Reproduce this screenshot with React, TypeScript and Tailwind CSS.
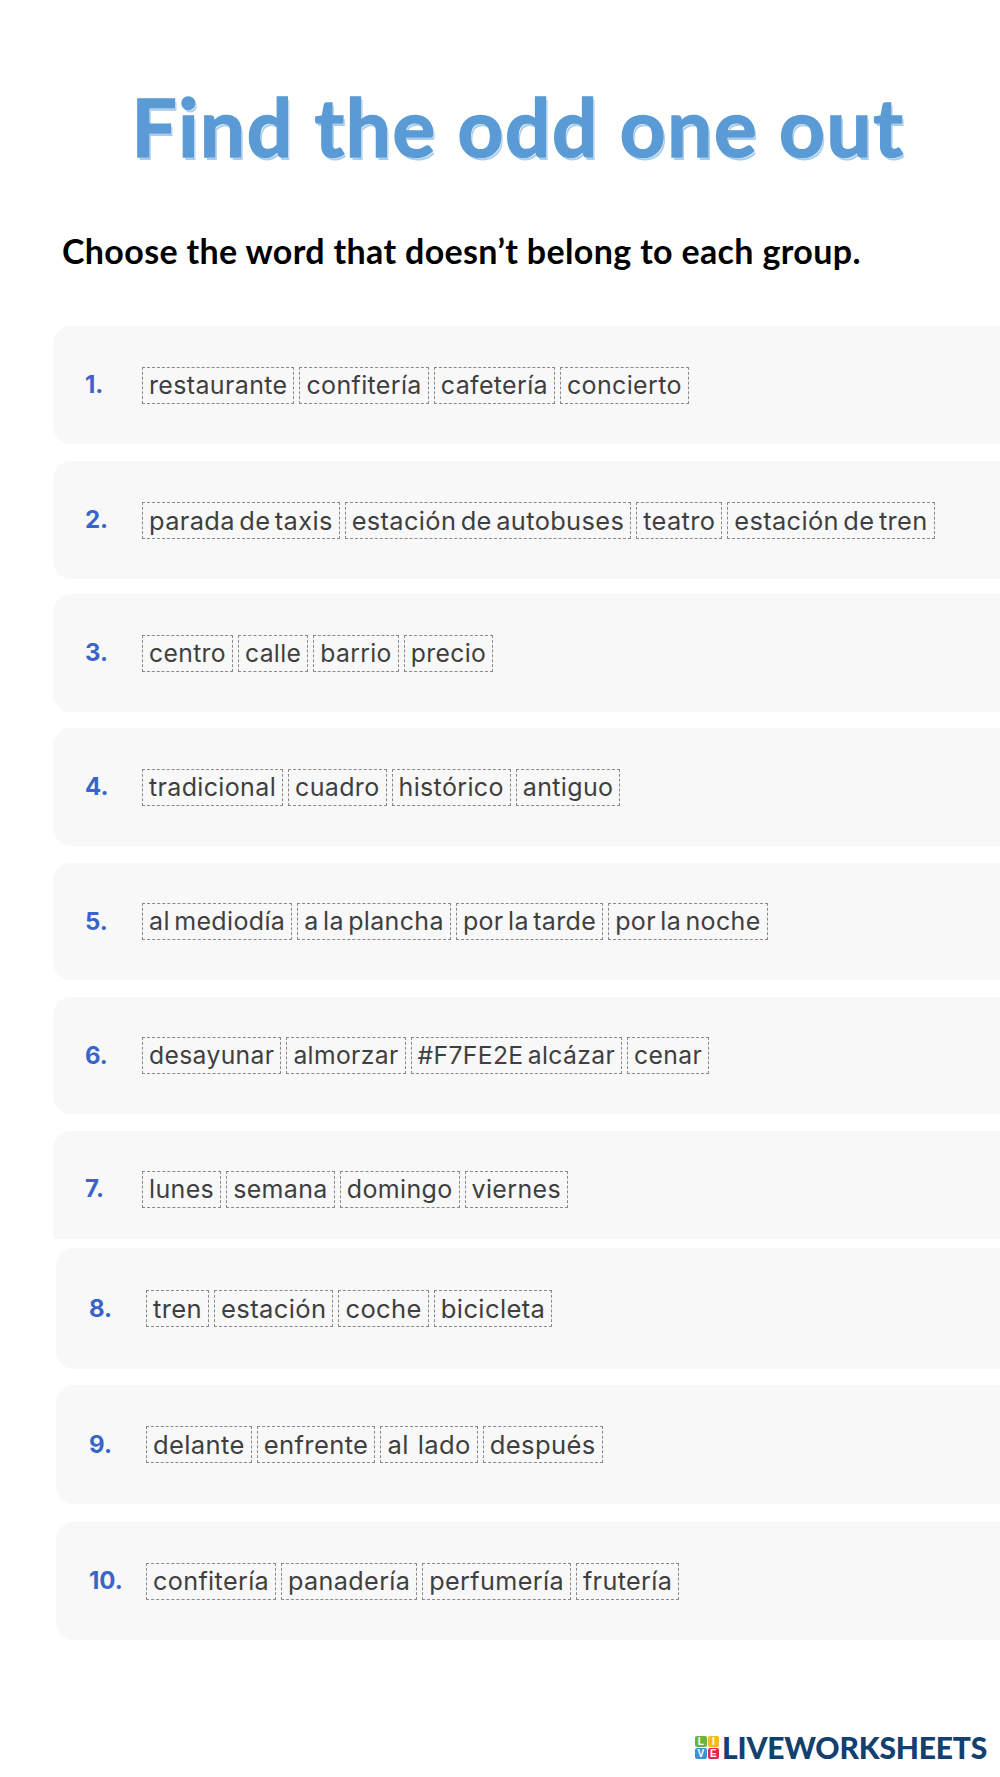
const ROWS = [
  { n: "1.", words: ["restaurante", "confitería", "cafetería", "concierto"], size: "text-[25px]", box: "mt-[55px] ml-[53px] h-[118px] rounded-l-[18px] pl-[32px]" },
  { n: "2.", words: ["parada de taxis", "estación de autobuses", "teatro", "estación de tren"], size: "text-[25.4px]", box: "mt-[17px] ml-[53px] h-[118px] rounded-l-[18px] pl-[32px]" },
  { n: "3.", words: ["centro", "calle", "barrio", "precio"], size: "text-[24.7px]", box: "mt-[15px] ml-[53px] h-[118px] rounded-l-[18px] pl-[32px]" },
  { n: "4.", words: ["tradicional", "cuadro", "histórico", "antiguo"], size: "text-[25px]", box: "mt-[16px] ml-[53px] h-[118px] rounded-l-[18px] pl-[32px]" },
  { n: "5.", words: ["al mediodía", "a la plancha", "por la tarde", "por la noche"], size: "text-[25px]", box: "mt-[17px] ml-[53px] h-[117px] rounded-l-[18px] pl-[32px]" },
  { n: "6.", words: ["desayunar", "almorzar", "#F7FE2E alcázar", "cenar"], size: "text-[24.7px]", box: "mt-[17px] ml-[53px] h-[117px] rounded-l-[18px] pl-[32px]" },
  { n: "7.", words: ["lunes", "semana", "domingo", "viernes"], size: "text-[25px]", box: "mt-[17px] ml-[53px] h-[108px] rounded-tl-[18px] pl-[32px] pt-[8px]" },
  { n: "8.", words: ["tren", "estación", "coche", "bicicleta"], size: "text-[25.6px]", box: "mt-[9px] ml-[56px] h-[121px] rounded-l-[18px] pl-[33px]" },
  { n: "9.", words: ["delante", "enfrente", "al  lado", "después"], size: "text-[25.6px]", box: "mt-[16px] ml-[56px] h-[119px] rounded-l-[18px] pl-[33px]" },
  { n: "10.", words: ["confitería", "panadería", "perfumería", "frutería"], size: "text-[25.2px]", box: "mt-[18px] ml-[56px] h-[118px] rounded-l-[18px] pl-[33px]" },
];

function Logo() {
  return (
    <div className="mt-[92px] mr-[13px] flex items-center justify-end gap-[3px]">
      <div className="grid h-[23px] w-[24px] grid-cols-2 gap-[1px] font-['Liberation_Sans',sans-serif] text-[10px] leading-[11px] font-bold text-white">
        <span className="rounded-[2px] bg-[#6db33f] text-center">L</span>
        <span className="rounded-[2px] bg-[#f5b921] text-center">I</span>
        <span className="rounded-[2px] bg-[#3f8fd8] text-center">V</span>
        <span className="rounded-[2px] bg-[#e5234f] text-center">E</span>
      </div>
      <span className="font-['Lato',sans-serif] text-[30px] leading-none font-black tracking-[-0.2px] text-[#12406f]">
        LIVEWORKSHEETS
      </span>
    </div>
  );
}

export default function App() {
  return (
    <div className="h-[1777px] overflow-hidden bg-white">
      <h1 className="pt-[76px] pl-[36px] text-center font-['Lato',sans-serif] text-[80px] leading-[100px] font-bold tracking-[1.5px] text-[#5b9bd5] [-webkit-text-stroke:1.5px_#5b9bd5] [text-shadow:1px_1px_0_#ffffff,2px_3px_0_#a9cdec]">
        Find the odd one out
      </h1>
      <p className="mt-[55px] ml-[62px] font-['Lato',sans-serif] text-[34px] leading-[40px] font-bold tracking-[0.35px] text-black">
        Choose the word that doesn’t belong to each group.
      </p>

      {ROWS.map((row) => (
        <div key={row.n} className={`flex items-center bg-[#f8f8f8] ${row.box}`}>
          <span className="w-[57px] shrink-0 font-['Inter',sans-serif] text-[24px] font-bold text-[#3a65c8]">
            {row.n}
          </span>
          <div className="flex gap-[5px]">
            {row.words.map((word) => (
              <span
                key={word}
                className={`h-[37px] border border-dashed border-[#8a8a8a] px-[6px] font-['Inter',sans-serif] leading-[35px] tracking-[0.35px] [word-spacing:-3px] whitespace-pre text-[#3f3f3f] ${row.size}`}
              >
                {word}
              </span>
            ))}
          </div>
        </div>
      ))}

      <Logo />
    </div>
  );
}
